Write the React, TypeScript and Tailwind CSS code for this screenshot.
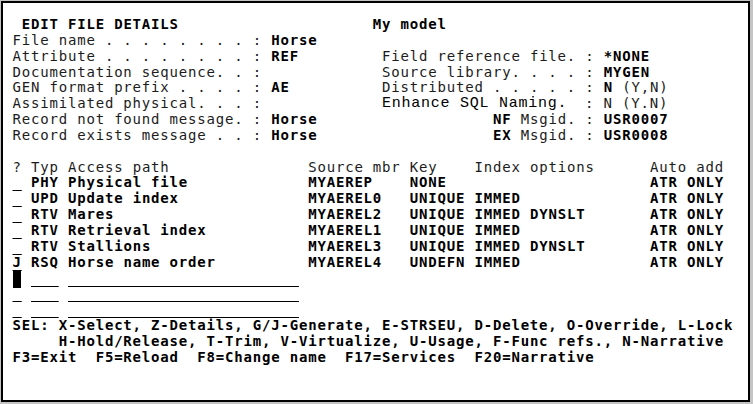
type Seg = { c: number; t: string; b?: boolean; u?: boolean; alt?: boolean; cur?: boolean };

const FIELD = ' '.repeat(25);

const rows: Seg[][] = [
  [{ c: 2, t: 'EDIT FILE DETAILS', b: true }, { c: 40, t: 'My model', b: true }],
  [{ c: 1, t: 'File name . . . . . . . . :' }, { c: 29, t: 'Horse', b: true }],
  [
    { c: 1, t: 'Attribute . . . . . . . . :' },
    { c: 29, t: 'REF', b: true },
    { c: 41, t: 'Field reference file. :' },
    { c: 65, t: '*NONE', b: true },
  ],
  [
    { c: 1, t: 'Documentation sequence. . :' },
    { c: 41, t: 'Source library. . . . :' },
    { c: 65, t: 'MYGEN', b: true },
  ],
  [
    { c: 1, t: 'GEN format prefix . . . . :' },
    { c: 29, t: 'AE', b: true },
    { c: 41, t: 'Distributed . . . . . :' },
    { c: 65, t: 'N', b: true },
    { c: 67, t: '(Y,N)' },
  ],
  [
    { c: 1, t: 'Assimilated physical. . . :' },
    { c: 41, t: 'Enhance SQL Naming.', alt: true },
    { c: 63, t: ':' },
    { c: 65, t: 'N (Y.N)' },
  ],
  [
    { c: 1, t: 'Record not found message. :' },
    { c: 29, t: 'Horse', b: true },
    { c: 53, t: 'NF', b: true },
    { c: 56, t: 'Msgid. :' },
    { c: 65, t: 'USR0007', b: true },
  ],
  [
    { c: 1, t: 'Record exists message . . :' },
    { c: 29, t: 'Horse', b: true },
    { c: 53, t: 'EX', b: true },
    { c: 56, t: 'Msgid. :' },
    { c: 65, t: 'USR0008', b: true },
  ],
  [],
  [
    { c: 1, t: '?' },
    { c: 3, t: 'Typ' },
    { c: 7, t: 'Access path' },
    { c: 33, t: 'Source mbr' },
    { c: 44, t: 'Key' },
    { c: 51, t: 'Index options' },
    { c: 70, t: 'Auto add' },
  ],
  [
    { c: 1, t: ' ', u: true },
    { c: 3, t: 'PHY', b: true },
    { c: 7, t: 'Physical file', b: true },
    { c: 33, t: 'MYAEREP', b: true },
    { c: 44, t: 'NONE', b: true },
    { c: 70, t: 'ATR ONLY', b: true },
  ],
  [
    { c: 1, t: ' ', u: true },
    { c: 3, t: 'UPD', b: true },
    { c: 7, t: 'Update index', b: true },
    { c: 33, t: 'MYAEREL0', b: true },
    { c: 44, t: 'UNIQUE IMMED', b: true },
    { c: 70, t: 'ATR ONLY', b: true },
  ],
  [
    { c: 1, t: ' ', u: true },
    { c: 3, t: 'RTV', b: true },
    { c: 7, t: 'Mares', b: true },
    { c: 33, t: 'MYAEREL2', b: true },
    { c: 44, t: 'UNIQUE IMMED', b: true },
    { c: 57, t: 'DYNSLT', b: true },
    { c: 70, t: 'ATR ONLY', b: true },
  ],
  [
    { c: 1, t: ' ', u: true },
    { c: 3, t: 'RTV', b: true },
    { c: 7, t: 'Retrieval index', b: true },
    { c: 33, t: 'MYAEREL1', b: true },
    { c: 44, t: 'UNIQUE IMMED', b: true },
    { c: 70, t: 'ATR ONLY', b: true },
  ],
  [
    { c: 1, t: ' ', u: true },
    { c: 3, t: 'RTV', b: true },
    { c: 7, t: 'Stallions', b: true },
    { c: 33, t: 'MYAEREL3', b: true },
    { c: 44, t: 'UNIQUE IMMED', b: true },
    { c: 57, t: 'DYNSLT', b: true },
    { c: 70, t: 'ATR ONLY', b: true },
  ],
  [
    { c: 1, t: 'J', u: true, b: true },
    { c: 3, t: 'RSQ', b: true },
    { c: 7, t: 'Horse name order', b: true },
    { c: 33, t: 'MYAEREL4', b: true },
    { c: 44, t: 'UNDEFN IMMED', b: true },
    { c: 70, t: 'ATR ONLY', b: true },
  ],
  [
    { c: 1, t: ' ', cur: true },
    { c: 3, t: '   ', u: true },
    { c: 7, t: FIELD, u: true },
  ],
  [
    { c: 1, t: ' ', u: true },
    { c: 3, t: '   ', u: true },
    { c: 7, t: FIELD, u: true },
  ],
  [
    { c: 1, t: ' ', u: true },
    { c: 3, t: '   ', u: true },
    { c: 7, t: FIELD, u: true },
  ],
  [{ c: 1, t: 'SEL: X-Select, Z-Details, G/J-Generate, E-STRSEU, D-Delete, O-Override, L-Lock', b: true }],
  [{ c: 6, t: 'H-Hold/Release, T-Trim, V-Virtualize, U-Usage, F-Func refs., N-Narrative', b: true }],
  [{ c: 1, t: 'F3=Exit  F5=Reload  F8=Change name  F17=Services  F20=Narrative', b: true }],
];

function Row({ segs }: { segs: Seg[] }) {
  let col = 1;
  const parts: React.ReactNode[] = [];
  segs.forEach((s, i) => {
    if (s.c > col) parts.push(<span key={'g' + i}>{' '.repeat(s.c - col)}</span>);
    if (s.cur) {
      parts.push(
        <span key={i} className="inline-block w-[8px] h-[17px] mr-[1.24px] bg-black align-top" />
      );
    } else if (s.alt) {
      parts.push(
        <span
          key={i}
          className="inline-block w-[203px] h-[15.85px] leading-[15.85px] align-top font-['Liberation_Mono',monospace] text-[15px] tracking-[0.75px] text-black"
        >
          {s.t}
        </span>
      );
      col = s.c + 22;
      return;
    } else {
      parts.push(
        <span
          key={i}
          className={
            (s.b ? 'font-bold text-black ' : '') +
            (s.u ? 'underline decoration-1 underline-offset-[3px] decoration-black' : '')
          }
        >
          {s.t}
        </span>
      );
    }
    col = s.c + s.t.length;
  });
  return <div className="h-[15.85px] leading-[15.85px] whitespace-pre">{parts}</div>;
}

export default function App() {
  return (
    <div className="w-[753px] h-[404px] bg-[#c4c4c4] overflow-hidden">
      <div className="ml-[1px] mt-[1px] w-[749px] h-[401px] border-2 border-black bg-white">
        <div className="pl-[9.5px] pt-[14px] font-['DejaVu_Sans_Mono',monospace] text-[14px] tracking-[0.81px] text-[#1c1c1c]">
          {rows.map((r, i) => (
            <Row key={i} segs={r} />
          ))}
        </div>
      </div>
    </div>
  );
}
